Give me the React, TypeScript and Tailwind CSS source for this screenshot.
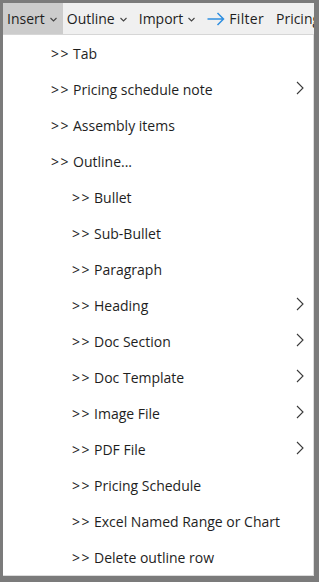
type Item = { label: string; level: number; sub?: boolean };

const items: Item[] = [
    { label: 'Tab', level: 1 },
    { label: 'Pricing schedule note', level: 1, sub: true },
    { label: 'Assembly items', level: 1 },
    { label: 'Outline...', level: 1 },
    { label: 'Bullet', level: 2 },
    { label: 'Sub-Bullet', level: 2 },
    { label: 'Paragraph', level: 2 },
    { label: 'Heading', level: 2, sub: true },
    { label: 'Doc Section', level: 2, sub: true },
    { label: 'Doc Template', level: 2, sub: true },
    { label: 'Image File', level: 2, sub: true },
    { label: 'PDF File', level: 2, sub: true },
    { label: 'Pricing Schedule', level: 2 },
    { label: 'Excel Named Range or Chart', level: 2 },
    { label: 'Delete outline row', level: 2 },
];

function Caret() {
    return (
        <svg width="7" height="5" viewBox="0 0 7 5" className="ml-[5px] mt-[1px]">
            <path d="M0.5 1L3.5 4L6.5 1" fill="none" stroke="#444" strokeWidth="1.1" />
        </svg>
    );
}

export default function App() {
    return (
        <div
            className="w-[319px] h-[582px] bg-[#7b7b7b] pt-[3px] pl-[3px] pr-[5px] overflow-hidden text-[14px] text-[#1e1e1e]"
            style={{ fontFamily: '"Open Sans", "Noto Sans", sans-serif' }}
        >
            {/* toolbar */}
            <div className="h-[32px] bg-[#f0f0f0] border-b border-[#d6d6d6] flex items-center whitespace-nowrap overflow-hidden">
                <div className="h-full bg-[#cccccc] flex items-center pl-[4px] pr-[6px]">
                    <span>Insert</span>
                    <Caret />
                </div>
                <div className="flex items-center pl-[4px] pr-[12px]">
                    <span>Outline</span>
                    <Caret />
                </div>
                <div className="flex items-center pr-[12px]">
                    <span>Import</span>
                    <Caret />
                </div>
                <div className="flex items-center pr-[12px]">
                    <svg width="18" height="14" viewBox="0 0 18 14" className="mr-[4px]">
                        <path d="M0.5 7H16.5M10.5 1L16.5 7L10.5 13" fill="none" stroke="#2f8fe0" strokeWidth="1.5" />
                    </svg>
                    <span className="tracking-[0.3px]">Filter</span>
                </div>
                <span>Pricing</span>
            </div>
            {/* dropdown menu */}
            <div className="w-[311px] bg-white border-r border-b border-[#dcdcdc]">
                {items.map((item) => (
                    <div key={item.label} className="h-[36px] flex items-center">
                        <span className={item.level === 1 ? 'pl-[48px]' : 'pl-[69px]'}>
                            <span className="tracking-[1.5px] mr-[3px]">{'>>'}</span>
                            {item.label}
                        </span>
                        {item.sub && (
                            <svg width="8" height="14" viewBox="0 0 8 14" className="ml-auto mr-[9px] -mt-[2px]">
                                <path d="M1 1L7 7L1 13" fill="none" stroke="#3a3a3a" strokeWidth="1.1" />
                            </svg>
                        )}
                    </div>
                ))}
            </div>
        </div>
    );
}
